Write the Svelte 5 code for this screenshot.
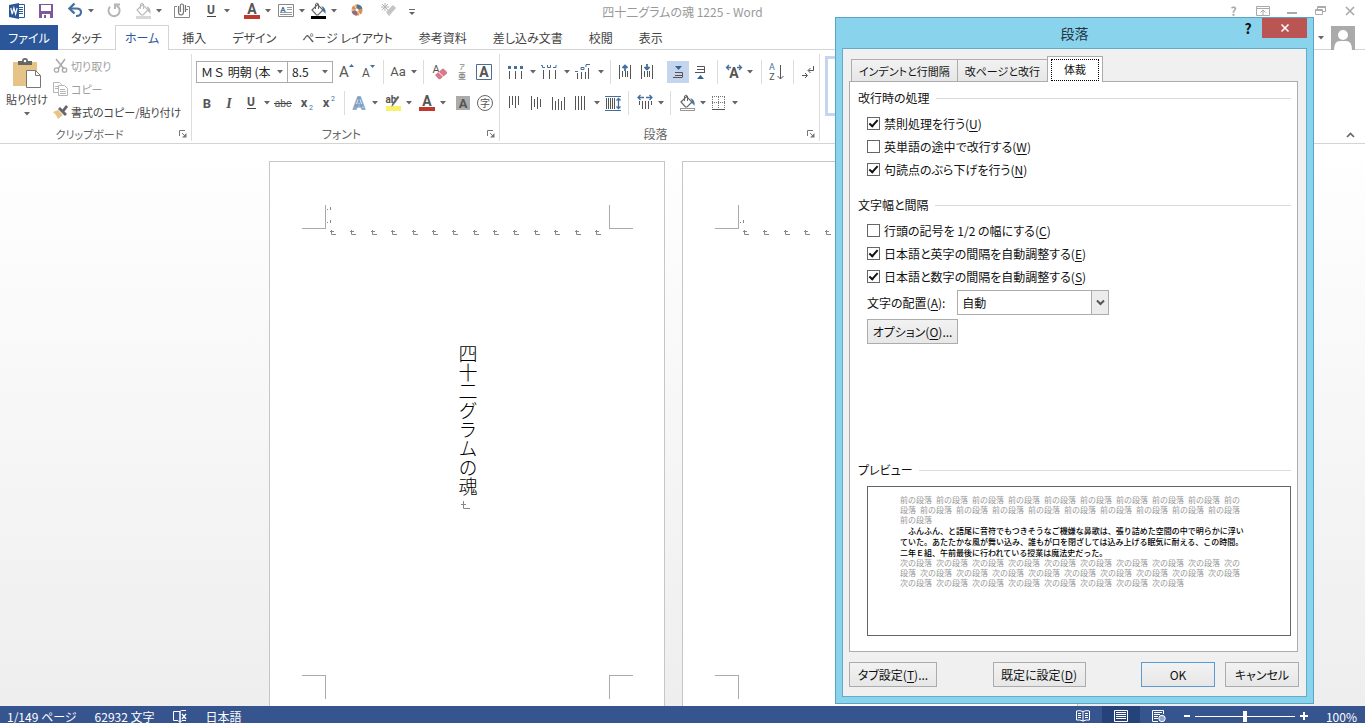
<script>
  const quick = ['word', 'm', 'save', 'm', 'undo', 'v', 'm', 'redo', 'm', 'fillgrey', 'v', 'm', 'attach', 'm', 'U', 'v', 'm', 's', 'fontcolor', 'v', 's', 'textbox', 'v', 'fillblack', 'v', 'm', 'palette', 'm', 's', 'wand', 's', 'more'];
  const font1 = ['s', 'grow', 'shrink', '|', 'Aa', 'v', '|', 's', 'eraser', 'ruby', 'boxed'];
  const font2 = ['B', 'I', 'U', 'v', 'abc', 's', 'sub', 'sup', '|', 'outline', 'v', 's', 'marker', 'v', 's', 'fontcolor', 'v', 's', 's', 'shadeA', 'circled'];
  const para1 = ['bullets', 's', 'v', 'numbers', 's', 'v', 'multi', 's', 'v', '|', 'outdent', 'indent', 'm', 's', 'justtop', 'justbot', 's', '|', 's', 'scaleA', 'v', 's', '|', 'sort', 's', '|', 'marks'];
  const para2 = ['al1', 'al2', 'al3', 'al4', 'v', 'dist', '|', 's', 'spacing', 'v', '|', 's', 'fillline', 'v', 'borders', 'v'];
  const labels = {
    word: 'Word', save: '上書き保存', undo: '元に戻す', redo: 'やり直し', fillgrey: '塗りつぶし', attach: '添付', U: '下線', fontcolor: 'フォントの色',
    textbox: 'テキスト ボックス', fillblack: '図形の塗りつぶし', palette: '配色', wand: '書式', more: 'その他', B: '太字', I: '斜体', abc: '取り消し線'
  };
  const tabs = ['タッチ', 'ホーム', '挿入', 'デザイン', 'ページ レイアウト', '参考資料', '差し込み文書', '校閲', '表示'];
  const breaks = Array.from({ length: 14 });
  const wrapChecks = [
    ['禁則処理を行う', 'U', true],
    ['英単語の途中で改行する', 'W', false],
    ['句読点のぶら下げを行う', 'N', true]
  ];
  const spaceChecks = [
    ['行頭の記号を 1/2 の幅にする', 'C', false],
    ['日本語と英字の間隔を自動調整する', 'E', true],
    ['日本語と数字の間隔を自動調整する', 'S', true]
  ];
  const rep = (t, n) => Array(n).fill(t).join('\u2002');
  const before = [rep('前の段落', 9) + '\u2002前の', '段落\u2002' + rep('前の段落', 9), '前の段落'];
  const body = [
    '　ふんふん、と語尾に音符でもつきそうなご機嫌な鼻歌は、張り詰めた空間の中で明らかに浮い',
    'ていた。あたたかな風が舞い込み、誰もが口を閉ざしては込み上げる眠気に耐える、この時間。',
    '二年Ｅ組、午前最後に行われている授業は魔法史だった。'
  ];
  const after = [rep('次の段落', 9) + '\u2002次の', '段落\u2002' + rep('次の段落', 9), rep('次の段落', 8)];
</script>

{#snippet bucket(line, drop, bar)}
  <path d="M5 10l5.500-5.500 5.500 5.500-5 5h-1.500z" fill="#fff" stroke={line} stroke-width="1.200" />
  <path d="M8.500 9V4q1.500-2 3 0v5" fill="none" stroke={line} />
  <path d="M14.500 6q5 2 4 8q-1.500-3-4-3.500l1.500-1z" fill={drop} />
  <rect x="4" y="16" width="15" height="3" fill={bar} />
{/snippet}

{#snippet vlines(list)}
  {#each list as [x, a, b]}
    <path d={`M${x + 0.5} ${a}V${b}`} stroke="#555" fill="none" />
  {/each}
{/snippet}

{#snippet down()}<svg width="6" height="4" viewBox="0 0 6 4"><path d="M0 0h6L3 3.500z" fill="#666" /></svg>{/snippet}

{#snippet icon(n)}
  <svg viewBox="0 0 22 22" width="22" height="22" aria-hidden="true">
    {#if n === 'word'}
      <path d="M12 4.500h6.500v13H12" fill="#fff" stroke="#2b579a" />
      <path d="M13 7.500h4M13 9.500h4M13 11.500h4M13 13.500h4" stroke="#2b579a" />
      <path d="M3 5l10-2v16l-10-2z" fill="#2b579a" />
      <path d="M4.800 8l1.400 6 1.700-6 1.700 6 1.500-6" fill="none" stroke="#fff" stroke-width="1.200" />
    {:else if n === 'save'}
      <path d="M4 4h14v14H4z" fill="#80579a" />
      <path d="M6 5h10v6H6zM7 14h8v4H7z" fill="#fff" />
      <path d="M9 15h2v3H9z" fill="#80579a" />
    {:else if n === 'undo'}
      <path d="M7 8.500h5.500q4.500 0 4.500 3.800t-5 3.700" fill="none" stroke="#44709f" stroke-width="2.200" />
      <path d="M10.500 3.500l-5 5 5 5" fill="none" stroke="#44709f" stroke-width="2.400" />
    {:else if n === 'redo'}
      <path d="M13.500 5.500A5.600 5.600 0 1 1 7 6.700" fill="none" stroke="#b5b5b5" stroke-width="2" />
      <path d="M12 9V4.500h5" fill="none" stroke="#b5b5b5" stroke-width="2" />
    {:else if n === 'fillgrey'}
      {@render bucket('#bbb', '#bbb', '#d8d8d8')}
    {:else if n === 'fillblack'}
      {@render bucket('#666', '#44709f', '#000')}
    {:else if n === 'fillline'}
      {@render bucket('#666', '#4d7596', '#999')}
      <rect x="5" y="17" width="13" height="1" fill="#fff" />
    {:else if n === 'attach'}
      <path d="M6 6.500H3.500v11h15v-11H16" fill="none" stroke="#888" />
      <path d="M7.500 6v6q0 3 2.500 3t2.500-3V6q0-2-1.600-2T9.300 6v6M14.500 5v7M15 9.500h2" fill="none" stroke="#777" stroke-width="1.200" />
    {:else if n === 'fontcolor'}
      <text x="11" y="14" class="g b" font-size="14">A</text>
      <rect x="3" y="15" width="16" height="4" fill="#c0392b" />
    {:else if n === 'textbox'}
      <path d="M3.500 4.500h15v12h-15z" fill="#fff" stroke="#888" />
      <text x="8" y="12" class="g b" font-size="8" fill="#44709f">A</text>
      <path d="M12 7.500h5M12 9.500h5M5 12.500h12M5 14.500h12" stroke="#999" />
    {:else if n === 'palette'}
      <circle cx="11" cy="10" r="3.600" fill="none" stroke="#d99256" stroke-width="4" stroke-dasharray="3.200 .57" />
      <path d="M11 6.400a3.600 3.600 0 0 1 3.400 2.600" fill="none" stroke="#4d7596" stroke-width="4" />
      <path d="M11 13.600a3.600 3.600 0 0 1-3.400-2.600" fill="none" stroke="#8e6b86" stroke-width="4" />
    {:else if n === 'wand'}
      <path d="M9 12l7-7 3 3-7 8z" fill="#c4c4c4" />
      <path d="M8 3v8M4 7h8M5 4l6 6M11 4L5 10" stroke="#b5b5b5" />
    {:else if n === 'more'}
      <path d="M8 9.500h6" stroke="#666" /><path d="M8 12h6l-3 3z" fill="#666" />
    {:else if n === 'B'}
      <text x="11" y="16" class="g b" font-size="13">B</text>
    {:else if n === 'I'}
      <text x="11" y="16" class="g b serif" font-size="14">I</text>
    {:else if n === 'U'}
      <text x="11" y="14" class="g b" font-size="12">U</text>
      <path d="M7 16.500h9" stroke="#444" />
    {:else if n === 'abc'}
      <text x="11" y="15" class="g" font-size="10">abc</text>
      <path d="M2 11.500h18" stroke="#444" />
    {:else if n === 'sub'}
      <text x="8" y="15" class="g b" font-size="13">x</text><text x="15" y="18" class="g" font-size="7" fill="#44709f">2</text>
    {:else if n === 'sup'}
      <text x="8" y="15" class="g b" font-size="13">x</text><text x="15" y="9" class="g" font-size="7" fill="#44709f">2</text>
    {:else if n === 'outline'}
      <text x="11" y="17" font-size="17" class="g b hollow">A</text>
    {:else if n === 'marker'}
      <rect x="4" y="14" width="15" height="5" fill="#f6f36b" />
      <text x="9" y="11" class="g b" font-size="10">ab</text>
      <path d="M17.500 5l-6 8-2 2 .5-3 5.500-8z" fill="#666" />
    {:else if n === 'shadeA'}
      <rect x="4" y="4" width="14" height="14" fill="#ababab" />
      <text x="11" y="16" class="g b" font-size="13">A</text>
    {:else if n === 'circled'}
      <circle cx="11" cy="11" r="7.500" fill="#fff" stroke="#666" />
      <text x="11" y="15" class="g" font-size="10">字</text>
    {:else if n === 'grow'}
      <text x="9" y="16" class="g" font-size="15">A</text><path d="M14 6l2.500-3L19 6z" fill="#44709f" />
    {:else if n === 'shrink'}
      <text x="9" y="16" class="g" font-size="12">A</text><path d="M13 4h5l-2.500 3z" fill="#44709f" />
    {:else if n === 'Aa'}
      <text x="11" y="15" class="g" font-size="13">Aa</text>
    {:else if n === 'eraser'}
      <text x="7" y="12" class="g" font-size="11">A</text>
      <path d="M6 14l7-6q1-1 2 0l3 3q.5 1-.5 2l-6 5q-1 .5-2 0z" fill="#d9788a" />
      <path d="M9.500 11l5 5" stroke="#fff" />
    {:else if n === 'ruby'}
      <text x="11" y="8" class="g" font-size="6">ア</text><text x="11" y="18" class="g" font-size="8">亜</text>
    {:else if n === 'boxed'}
      <path d="M3.500 3.500h15v15h-15z" fill="#fff" stroke="#4d6f8f" />
      <text x="11" y="16" class="g b" font-size="14">A</text>
    {:else if n === 'bullets'}
      <path d="M4 5h3v3H4zM10 5h3v3h-3zM16 5h3v3h-3z" fill="#44709f" />
      {@render vlines([[5, 10, 18], [11, 10, 18], [17, 10, 18]])}
    {:else if n === 'numbers'}
      <path d="M3 4.500h1.500v2H7M9.500 4v2.500h3V4M15 6.500h3V4" fill="none" stroke="#44709f" />
      {@render vlines([[5, 9, 18], [11, 9, 18], [17, 9, 18]])}
    {:else if n === 'multi'}
      <path d="M3 10.500h3M9 8.500h3v-2H9zM14 6V3.500h4" fill="none" stroke="#44709f" />
      {@render vlines([[5, 12, 18], [9, 11, 18], [13, 11, 18], [16, 7, 18]])}
    {:else if n === 'outdent'}
      {@render vlines([[5, 4, 18], [8, 10, 16], [11, 10, 16], [13, 10, 16], [16, 4, 18]])}
      <path d="M11 10V4.500M8.500 7L11 4.500 13.500 7" fill="none" stroke="#44709f" stroke-width="1.800" />
    {:else if n === 'indent'}
      {@render vlines([[5, 4, 18], [8, 10, 16], [11, 10, 16], [13, 10, 16], [16, 4, 18]])}
      <path d="M11 3v5M8.500 6L11 8.500 13.500 6" fill="none" stroke="#44709f" stroke-width="1.800" />
    {:else if n === 'justtop'}
      <path d="M8 5h7l-3.500 4z" fill="#2f6695" /><path d="M8 11.500h7.500v5M8 14.500h7M6 16.500h9" fill="none" stroke="#555" />
    {:else if n === 'justbot'}
      <path d="M8 18h7l-3.500-4z" fill="#2f6695" /><path d="M8 5.500h7.500v6M8 8.500h7M6 11.500h10" fill="none" stroke="#555" />
    {:else if n === 'scaleA'}
      <text x="11" y="17" class="g b" font-size="14">A</text>
      <path d="M8 6.500H4M6 4L3.500 6.500 6 9M14 6.500h4M16 4l2.500 2.500L16 9" fill="none" stroke="#44709f" stroke-width="1.300" />
    {:else if n === 'sort'}
      <text x="7" y="9" class="g" font-size="9" fill="#44709f">A</text><text x="7" y="19" class="g" font-size="9">Z</text>
      <path d="M15.500 4v14M12.500 15l3 3 3-3" fill="none" stroke="#555" />
    {:else if n === 'marks'}
      <path d="M16.500 5v4.500h-5M13.500 7L11 9.500l2.500 2.500M5 14.500h5M8 12l2.500 2.500L8 17" fill="none" stroke="#555" />
    {:else if n === 'al1'}
      {@render vlines([[5, 4, 16], [8, 4, 13], [11, 4, 16], [14, 4, 13]])}
    {:else if n === 'al2'}
      {@render vlines([[5, 4, 18], [8, 7, 15], [11, 5, 17], [14, 7, 15]])}
    {:else if n === 'al3'}
      {@render vlines([[4, 5, 18], [7, 9, 18], [10, 7, 18], [13, 9, 18], [16, 5, 18]])}
    {:else if n === 'al4'}
      {@render vlines([[5, 4, 18], [8, 4, 18], [11, 4, 18], [14, 4, 18]])}
    {:else if n === 'dist'}
      <path d="M3 4.500h16M3 18.500h16" stroke="#44709f" />
      {@render vlines([[4, 6, 17], [6, 6, 17], [8, 6, 17], [10, 6, 17], [12, 6, 17]])}
      <path d="M16.500 6.500v10M14.500 8.500l2-2 2 2M14.500 14.500l2 2 2-2" fill="none" stroke="#44709f" stroke-width="1.300" />
    {:else if n === 'spacing'}
      {@render vlines([[5, 9, 13], [8, 9, 17], [11, 9, 17], [14, 9, 17], [17, 9, 13]])}
      <path d="M10 5.500H4M6.500 3L4 5.500 6.500 8M12 5.500h6M15.500 3L18 5.500 15.500 8" fill="none" stroke="#44709f" stroke-width="1.300" />
    {:else if n === 'borders'}
      <path d="M4.500 5v12M10.500 5v12M16.500 5v12M4 4.500h13M4 10.500h13" stroke="#777" stroke-dasharray="1 1" /><path d="M4 17.500h13" stroke="#555" />
    {/if}
  </svg>
{/snippet}

{#snippet toolbar(items)}
  {#each items as n}
    {#if n === 'v'}
      <button class="caret" aria-label="メニュー">{@render down()}</button>
    {:else if n === '|'}<span class="sep"></span>
    {:else if n === 's'}<span class="s2"></span>
    {:else if n === 'm'}<span class="s7"></span>
    {:else}
      <button class="tool" class:on={n === 'justtop'} aria-label={labels[n] ?? n}>{@render icon(n)}</button>
    {/if}
  {/each}
{/snippet}

{#snippet launcher()}
  <button class="launch" aria-label="詳細"><svg width="8" height="8" viewBox="0 0 8 8"><path d="M.5 6V.5H6M3 3l3 3" fill="none" stroke="#777" /><path d="M7.500 3v4.500H3z" fill="#777" /></svg></button>
{/snippet}

{#snippet page(title)}
  <section class="page">
    <div class="marks top">
      <i class="tl"></i>
      <svg width="6" height="23" viewBox="0 0 6 23">
        {#if title}<path d="M4.500 2v3M1.500 4v1" stroke="#888" />{/if}
        <path d="M4.500 15v3M1.500 17v1" stroke="#888" />
      </svg>
      <i class="tr"></i>
    </div>
    <div class="breaks">
      {#each breaks as _}<svg width="6" height="6" viewBox="0 0 6 6"><path d="M0 1.500h4M1.500 0v4.500H6" fill="none" stroke="#888" /></svg>{/each}
    </div>
    <div class="text">
      {#if title}
        <h1>{title}</h1>
        <svg width="13" height="9" viewBox="0 0 13 9"><path d="M0 3.500h5M2.500 0v7.500H9" fill="none" stroke="#888" /></svg>
      {/if}
    </div>
    <div class="marks bottom"><i class="bl"></i><i class="br"></i></div>
  </section>
{/snippet}

{#snippet check([label, key, on])}
  <label class="check"><input type="checkbox" checked={on} /><span>{label}(<u>{key}</u>)</span></label>
{/snippet}

<div class="app">
  <header class="title">
    <div class="quick">{@render toolbar(quick)}</div>
    <div class="doc">四十二グラムの魂 1225 - Word</div>
    <div class="win">
      <button aria-label="ヘルプ"><b>?</b></button>
      <button aria-label="リボンの表示オプション"><svg width="14" height="12" viewBox="0 0 14 12"><path d="M.5 1.500h13v9H.5zM.5 3.500h13M7 10V5M4.500 7.500L7 5l2.500 2.500" fill="none" stroke="#aaa" /></svg></button>
      <button aria-label="最小化"><svg width="10" height="12" viewBox="0 0 10 12"><path d="M0 8h10" stroke="#aaa" stroke-width="2" /></svg></button>
      <button aria-label="元に戻す(縮小)"><svg width="11" height="10" viewBox="0 0 11 10"><path d="M2.500 3V.5h8v5H8M.5 3.500h7v5h-7zM.5 4.500h7M2.500 1.500h8" fill="none" stroke="#aaa" /></svg></button>
      <button aria-label="閉じる"><svg width="10" height="10" viewBox="0 0 10 10"><path d="M1 1l8 8M9 1L1 9" stroke="#aaa" stroke-width="1.700" /></svg></button>
    </div>
  </header>

  <nav class="tabs">
    <button class="file">ファイル</button>
    {#each tabs as t}<button class:active={t === 'ホーム'}>{t}</button>{/each}
    <div class="user">
      {@render down()}
      <svg width="24" height="24" viewBox="0 0 24 24"><path d="M0 0h24v24H0z" fill="#aaa" /><circle cx="12" cy="9" r="5" fill="#fff" /><path d="M3 24q0-9 6-9h6q6 0 6 9z" fill="#fff" /></svg>
    </div>
  </nav>

  <div class="ribbon">
    <section class="group clip">
      <div class="cliprow">
        <button class="paste">
          <svg width="30" height="32" viewBox="0 0 30 32">
            <path d="M1 4h24v24H1z" fill="#e6c488" />
            <path d="M6 3h4q0-3 3-3t3 3h4v4H6z" fill="#666" /><circle cx="13" cy="3" r="1.300" fill="#fff" />
            <path d="M14.500 12.500h9l5 5v12h-14z" fill="#fff" stroke="#777" /><path d="M23.500 12.500v5h5" fill="none" stroke="#777" />
          </svg>
          <span>貼り付け</span>
          {@render down()}
        </button>
        <div class="clipcol">
          <button class="dim"><svg width="16" height="16" viewBox="0 0 16 16"><path d="M3 1l8 10M12 1L5 11" stroke="#aaa" stroke-width="1.500" /><circle cx="3.500" cy="12" r="2.200" fill="none" stroke="#aaa" stroke-width="1.300" /><circle cx="11.500" cy="12" r="2.200" fill="none" stroke="#aaa" stroke-width="1.300" /></svg>切り取り</button>
          <button class="dim"><svg width="16" height="16" viewBox="0 0 16 16"><path d="M.5 1.500h6l2 2v8h-8zM2 5.500h3M2 7.500h3" fill="none" stroke="#b5b5b5" /><path d="M5.500 4.500h6l3 3v7h-9zM7 8.500h5M7 10.500h6M7 12.500h6" fill="#fff" stroke="#b5b5b5" /></svg>コピー</button>
          <button><svg width="16" height="16" viewBox="0 0 16 16"><path d="M0 8l5-2 5 5-5 4q-1-4-5-7z" fill="#e6c488" /><path d="M5 5l2-2 7 7-2 2z" fill="#666" /><path d="M9 6l4-5 2 2-4 5z" fill="#666" /></svg>書式のコピー/貼り付け</button>
        </div>
      </div>
      <footer><span>クリップボード</span>{@render launcher()}</footer>
    </section>
    <section class="group font">
      <div class="row">
        <button class="combo face">ＭＳ 明朝 (本{@render down()}</button>
        <button class="combo size">8.5{@render down()}</button>
        {@render toolbar(font1)}
      </div>
      <div class="row">{@render toolbar(font2)}</div>
      <footer><span>フォント</span>{@render launcher()}</footer>
    </section>
    <section class="group para">
      <div class="row">{@render toolbar(para1)}</div>
      <div class="row">{@render toolbar(para2)}</div>
      <footer><span>段落</span>{@render launcher()}</footer>
    </section>
    <div class="styles"></div>
    <button class="fold" aria-label="リボンを折りたたむ"><svg width="9" height="6" viewBox="0 0 9 6"><path d="M1 5l3.500-3.500L8 5" fill="none" stroke="#666" stroke-width="1.700" /></svg></button>
  </div>

  <main class="canvas">
    {@render page('四十二グラムの魂')}
    {@render page('')}
  </main>

  <footer class="status">
    <span>1/149 ページ</span>
    <span>62932 文字</span>
    <svg class="proof" width="15" height="13" viewBox="0 0 15 13"><path d="M7 1.500H.5v9H5l2 2zM7 12.500V1.500L8.500.5H13M7 12.500l2-2h4" fill="none" stroke="#fff" /><path d="M9 4l4 5M13 4L9 9" stroke="#fff" stroke-width="1.300" /></svg>
    <span>日本語</span>
    <div class="views">
      <button aria-label="閲覧モード"><svg width="14" height="12" viewBox="0 0 14 12"><path d="M7 1.500v10M7 1.500Q4 0 .5 1v9q3.500-.5 6.500 1 3-1.500 6.500-1V1Q10 0 7 1.500M2 3.500h3M2 5.500h3M2 7.500h3M9 3.500h3M9 5.500h3M9 7.500h3" fill="none" stroke="#fff" /></svg></button>
      <button class="sel" aria-label="印刷レイアウト"><svg width="14" height="12" viewBox="0 0 14 12"><path d="M.5.5h13v11H.5zM2 2.500h10M2 4.500h10M2 6.500h10M2 8.500h10" fill="none" stroke="#fff" /></svg></button>
      <button aria-label="Web レイアウト"><svg width="14" height="12" viewBox="0 0 14 12"><path d="M11.500 4V.5H.5v11H6M2 2.500h8M2 4.500h6M2 6.500h4M2 8.500h4" fill="none" stroke="#fff" /><circle cx="10" cy="8.500" r="3.200" fill="#8fa6cc" stroke="#fff" /></svg></button>
    </div>
    <div class="zoombar">
      <button aria-label="縮小"><svg width="6" height="8" viewBox="0 0 6 8"><path d="M0 4h6" stroke="#fff" stroke-width="2" /></svg></button>
      <input class="zoom" type="range" min="0" max="100" value="50" aria-label="ズーム" />
      <button aria-label="拡大"><svg width="8" height="8" viewBox="0 0 8 8"><path d="M0 4h8M4 0v8" stroke="#fff" stroke-width="2" /></svg></button>
    </div>
    <span>100%</span>
  </footer>

  <div class="dialog" role="dialog" aria-labelledby="dlg">
    <header>
      <h2 id="dlg">段落</h2>
      <div class="dbtn">
        <button class="help" aria-label="ヘルプ">?</button>
        <button class="close" aria-label="閉じる"><svg width="8" height="8" viewBox="0 0 8 8"><path d="M.5.5l7 7M7.500.5l-7 7" stroke="#fff" stroke-width="1.500" /></svg></button>
      </div>
    </header>
    <div class="inner">
      <div class="dtabs" role="tablist">
        <button role="tab">インデントと行間隔</button><button role="tab">改ページと改行</button><button role="tab" class="cur" aria-selected="true"><span>体裁</span></button>
      </div>
      <div class="panel">
        <h3>改行時の処理</h3>
        <div class="checks">{#each wrapChecks as c}{@render check(c)}{/each}</div>
        <h3>文字幅と間隔</h3>
        <div class="checks">
          {#each spaceChecks as c}{@render check(c)}{/each}
        </div>
        <div class="align">
          <label for="al">文字の配置(<u>A</u>):</label>
          <div class="pick">
            <select id="al"><option>自動</option></select>
            <span><svg width="9" height="7" viewBox="0 0 9 7"><path d="M1 1.500L4.500 5 8 1.500" fill="none" stroke="#555" stroke-width="2" /></svg></span>
          </div>
        </div>
        <button class="btn opt">オプション(<u>O</u>)...</button>
        <h3 class="pv">プレビュー</h3>
        <div class="preview">
          {#each before as l}<p>{l}</p>{/each}
          {#each body as l}<p class="k">{l}</p>{/each}
          {#each after as l}<p>{l}</p>{/each}
        </div>
      </div>
      <div class="actions">
        <button class="btn w1">タブ設定(<u>T</u>)...</button>
        <button class="btn w2">既定に設定(<u>D</u>)</button>
        <button class="btn ok">OK</button>
        <button class="btn">キャンセル</button>
      </div>
    </div>
  </div>
</div>

<style>
  :global(body) { margin: 0; }
  .app {
    position: relative; display: flex; flex-direction: column; height: 100vh; overflow: hidden;
    background: #fff; color: #444; font: 12px/16px "Noto Sans CJK JP", sans-serif; font-feature-settings: "palt";
  }
  button { font: inherit; font-feature-settings: inherit; color: inherit; border: 0; padding: 0; background: none; white-space: nowrap; }
  svg { display: block; flex: none; overflow: visible; }
  h1, h2, h3, p { margin: 0; font-weight: 400; }
  u { text-underline-offset: 2px; }
  .g { text-anchor: middle; fill: #555; font-family: Roboto, "Noto Sans CJK JP", sans-serif; }
  .g[fill] { fill: #44709f; }
  .b { font-weight: 700; }
  .hollow { fill: #fff; stroke: #7f9fc2; stroke-width: 1.3px; }
  .serif { font-family: "Liberation Serif", serif; font-style: italic; }

  .tool { width: 22px; height: 22px; flex: none; }
  .tool.on { background: #c5d5ee; }
  .caret { width: 10px; height: 22px; flex: none; display: flex; align-items: center; justify-content: center; }
  .sep { width: 8px; height: 24px; flex: none; background: linear-gradient(#dcdcdc, #dcdcdc) center / 1px 100% no-repeat; }
  .s2 { width: 2px; flex: none; }
  .s7 { width: 7px; flex: none; }

  .title { display: grid; grid-template-columns: 1fr auto 1fr; height: 25px; flex: none; }
  .quick { display: flex; padding-left: 6px; min-width: 0; }
  .doc { color: #999; line-height: 24px; }
  .win { display: flex; justify-content: flex-end; height: 22px; padding-right: 1px; color: #aaa; }
  .win button { width: 29px; display: flex; align-items: center; justify-content: center; }

  .tabs { display: flex; height: 25px; flex: none; box-sizing: border-box; box-shadow: inset 0 -1px #d4d4d4; }
  .tabs button { padding: 0 13px; }
  .tabs .file { width: 58px; padding: 0; background: #2b579a; color: #fff; }
  .tabs .active { padding: 0 9px; color: #2b579a; background: #fff; border: 1px solid #d4d4d4; border-bottom: 0; }
  .user { margin-left: auto; display: flex; align-items: center; gap: 7px; padding-right: 10px; }

  .ribbon { display: flex; height: 93px; flex: none; border-bottom: 1px solid #d4d4d4; }
  .group { display: flex; flex-direction: column; margin: 4px 0 2px; border-right: 1px solid #dcdcdc; box-sizing: border-box; flex: none; }
  .group footer { margin-top: auto; display: flex; align-items: center; padding-right: 4px; height: 14px; }
  .group footer span { flex: 1; text-align: center; color: #666; }
  .clip { width: 192px; font-size: 11px; }
  .font { width: 308px; padding-left: 4px; }
  .para { width: 320px; padding-left: 4px; }
  .row { display: flex; align-items: center; height: 24px; margin-top: 6px; }
  .row + .row { margin-top: 7px; }
  .launch { width: 8px; height: 8px; }
  .combo { height: 22px; border: 1px solid #ababab; box-sizing: border-box; display: flex; align-items: center; justify-content: space-between; padding: 0 4px; color: #222; background: #fff; overflow: hidden; }
  .face { width: 92px; font-feature-settings: normal; }
  .size { width: 46px; margin-left: -1px; }
  .cliprow { display: flex; padding-left: 4px; }
  .paste { width: 46px; display: flex; flex-direction: column; align-items: center; padding-top: 4px; }
  .paste span { margin: 0 0 4px; line-height: 18px; }
  .clipcol { display: flex; flex-direction: column; padding-left: 3px; }
  .clipcol button { display: flex; align-items: center; gap: 2px; height: 23px; }
  .dim { color: #a0a0a0; }
  .styles { width: 40px; height: 54px; margin: 6px 0 0 5px; border: 3px solid #c5d5ee; }
  .fold { margin: auto 10px 5px auto; }

  .canvas { flex: 1; min-height: 0; display: flex; justify-content: center; gap: 17px; padding: 17px 18px 0 0; overflow: hidden; background: linear-gradient(#fff, #eee); }
  .page { width: 396px; height: 560px; flex: none; box-sizing: border-box; border: 1px solid #c6c6c6; background: #fff; padding: 43px 31px 0 32px; display: flex; flex-direction: column; }
  .marks { display: flex; justify-content: space-between; }
  .marks i { width: 23px; height: 23px; border: 0 solid #aaa; }
  .marks svg { margin-right: auto; }
  .marks .tl { border-width: 0 1px 1px 0; }
  .marks .tr { border-width: 0 0 1px 1px; }
  .marks .bl { border-width: 1px 1px 0 0; }
  .marks .br { border-width: 1px 0 0 1px; }
  .breaks { display: flex; justify-content: space-between; padding: 1px 32px 0 28px; }
  .text { height: 439px; display: flex; flex-direction: column; align-items: center; gap: 5px; padding-top: 108px; box-sizing: border-box; }
  h1 { writing-mode: vertical-rl; font-size: 19px; line-height: 22px; color: #000; font-weight: 300; font-feature-settings: normal; }

  .status { display: flex; align-items: center; height: 17px; flex: none; background: #36558f; color: #fff; padding: 0 8px 0 7px; gap: 18px; line-height: 17px; }
  .status > span { padding-top: 3px; }
  .proof { margin-top: 3px; }
  .views { margin-left: auto; display: flex; }
  .views button { width: 38px; height: 17px; display: flex; justify-content: center; padding-top: 4px; box-sizing: border-box; }
  .views .sel { background: #25427a; }
  .zoombar { display: flex; align-items: center; gap: 5px; padding-top: 3px; margin-left: -12px; }
  .zoom { appearance: none; width: 100px; height: 13px; margin: 0; background: linear-gradient(#fff, #fff) center / 100% 1px no-repeat; }
  .zoom::-webkit-slider-thumb { appearance: none; width: 4px; height: 11px; background: #fff; }

  .dialog { position: absolute; top: 17px; right: 51px; width: 479px; height: 687px; box-sizing: border-box; border: 1px solid #5ba3c4; background: #89d3ec; padding: 0 6px 6px; color: #111; display: flex; flex-direction: column; }
  .dialog > header { display: grid; grid-template-columns: 1fr auto 1fr; height: 30px; flex: none; }
  h2 { grid-column: 2; font-size: 14px; line-height: 30px; color: #234; }
  .dbtn { display: flex; justify-content: flex-end; height: 20px; }
  .help { width: 28px; font-weight: 700; font-size: 14px; line-height: 20px; }
  .close { width: 45px; background: #bb5553; display: flex; align-items: center; justify-content: center; }
  .inner { flex: 1; border: 1px solid #62abc9; background: #f0f0f0; padding: 8px 8px 9px 6px; display: flex; flex-direction: column; }
  .dtabs { display: flex; align-items: flex-end; padding-left: 2px; height: 24px; font-size: 11px; }
  .dtabs button { height: 22px; box-sizing: border-box; border: 1px solid #acacac; border-bottom: 0; background: linear-gradient(#f2f2f2, #e6e6e6); padding: 0 7px; margin-right: -1px; }
  .dtabs .cur { height: 26px; padding: 0 3px; background: #fff; position: relative; margin-bottom: -1px; }
  .cur span { display: block; border: 1px dotted #000; padding: 1px 12px 3px; }
  .panel { flex: 1; border: 1px solid #acacac; background: #fff; padding: 8px 6px 15px 8px; display: flex; flex-direction: column; }
  h3 { display: flex; align-items: center; gap: 6px; font-size: 12px; line-height: 16px; }
  h3::after { content: ""; flex: 1; height: 1px; background: #dcdcdc; }
  .checks { padding: 6px 0 0 9px; }
  .checks + h3 { margin-top: 16px; }
  .check { display: flex; align-items: center; gap: 4px; height: 23px; }
  .check input { appearance: none; box-sizing: border-box; width: 13px; height: 13px; margin: 0; border: 1px solid #666; background: #fff; display: grid; place-items: center; }
  .check input:checked::after { content: ""; width: 3px; height: 7px; border: solid #111; border-width: 0 2px 2px 0; transform: translateY(-1px) rotate(42deg); }
  .align { display: flex; align-items: center; gap: 12px; padding: 2px 0 0 9px; }
  .pick { display: grid; width: 152px; height: 25px; }
  select { grid-area: 1 / 1; appearance: none; font: inherit; border: 1px solid #acacac; border-radius: 0; background: #fff; padding: 0 4px; color: #111; }
  .pick span { grid-area: 1 / 1; justify-self: end; width: 16px; border: 1px solid #acacac; background: #ececec; display: grid; place-items: center; pointer-events: none; }
  .btn { height: 25px; width: 74px; box-sizing: border-box; border: 1px solid #acacac; background: linear-gradient(#f2f2f2, #e7e7e7); }
  .opt { margin: 4px 0 0 9px; width: 91px; flex: none; }
  .pv { margin-top: auto; }
  .preview { margin: 8px 0 0 9px; height: 150px; box-sizing: border-box; border: 1px solid #666; padding: 8px 32px; font-size: 8px; line-height: 10px; color: #999; font-feature-settings: normal; overflow: hidden; }
  .preview p { white-space: pre; }
  .preview .k { color: #000; font-weight: 500; line-height: 11px; }
  .actions { display: flex; gap: 10px; padding-top: 10px; margin-right: -1px; }
  .w1 { width: 88px; }
  .w2 { width: 93px; margin: 0 auto; }
  .ok { border-color: #5b9bd0; }
</style>
